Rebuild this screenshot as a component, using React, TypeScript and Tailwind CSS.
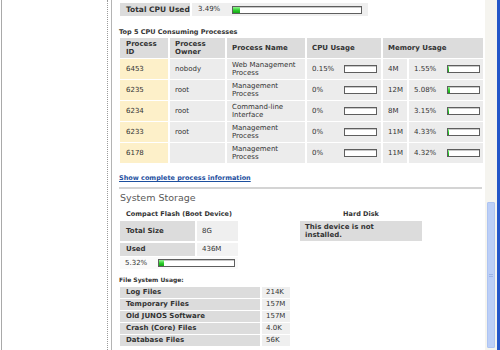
import React from 'react';

const PROCESSES = [
  { pid: '6453', owner: 'nobody', name: ['Web Management', 'Process'], cpu: '0.15%', cpuFill: 0, mem: '4M', memPct: '1.55%', memFill: 1 },
  { pid: '6235', owner: 'root', name: ['Management', 'Process'], cpu: '0%', cpuFill: 0, mem: '12M', memPct: '5.08%', memFill: 2 },
  { pid: '6234', owner: 'root', name: ['Command-line', 'Interface'], cpu: '0%', cpuFill: 0, mem: '8M', memPct: '3.15%', memFill: 1 },
  { pid: '6233', owner: 'root', name: ['Management', 'Process'], cpu: '0%', cpuFill: 0, mem: '11M', memPct: '4.33%', memFill: 1 },
  { pid: '6178', owner: '', name: ['Management', 'Process'], cpu: '0%', cpuFill: 0, mem: '11M', memPct: '4.32%', memFill: 1 },
];

const FILE_SYSTEMS = [
  { label: 'Log Files', size: '214K' },
  { label: 'Temporary Files', size: '157M' },
  { label: 'Old JUNOS Software', size: '157M' },
  { label: 'Crash (Core) Files', size: '4.0K' },
  { label: 'Database Files', size: '56K' },
];

const Bar: React.FC<{ fill: number; className: string }> = ({ fill, className }) => (
  <div className={`h-[8px] border border-[#5e5e5e] bg-white shadow-[inset_0_1px_0_#c8c8c8] flex ${className}`}>
    {fill > 0 && <div className="h-full bg-gradient-to-b from-[#8ef58e] via-[#2ed12e] to-[#16a616]" style={{ width: `${fill}px` }} />}
  </div>
);

const App: React.FC = () => {
  return (
    <div className="w-[500px] h-[350px] overflow-hidden flex bg-white text-[#333] font-['DejaVu_Sans',Verdana,sans-serif]">
      {/* left nav pane */}
      <div className="w-px ml-px bg-[#a9a9a9]" />
      <div className="w-[106px] border-r border-dotted border-[#9a9a9a]" />
      <div className="w-[3px]" />

      {/* main content */}
      <div className="w-[374px] border-l border-[#b4b4b4] pl-[6px] pt-[3px]">
        <div className="flex gap-[2px] ml-[2px] h-[13px]">
          <div className="w-[70px] bg-[#dcdcdc] flex items-center pl-[6px] text-[7.5px] font-bold">Total CPU Used</div>
          <div className="w-[176px] bg-[#efefef] flex items-center pl-[6px] text-[7px]">
            <span className="w-[34px]">3.49%</span>
            <Bar fill={7} className="w-[130px]" />
          </div>
        </div>

        <div className="mt-[12px] ml-[1px] text-[6.5px] font-bold leading-[8px]">Top 5 CPU Consuming Processes</div>

        <table className="mt-[1px] border-separate border-spacing-x-[2px] border-spacing-y-px text-[7px] leading-[8.5px]">
          <thead>
            <tr className="h-[20px] text-left font-bold">
              <th className="w-[48px] bg-[#dcdcdc] pl-[6px] align-middle">Process<br />ID</th>
              <th className="w-[55px] bg-[#dcdcdc] pl-[5px] align-middle">Process<br />Owner</th>
              <th className="w-[78px] bg-[#dcdcdc] pl-[5px] align-middle">Process Name</th>
              <th className="w-[74px] bg-[#dcdcdc] pl-[5px] align-middle">CPU Usage</th>
              <th colSpan={2} className="bg-[#dcdcdc] pl-[5px] align-middle">Memory Usage</th>
            </tr>
          </thead>
          <tbody>
            {PROCESSES.map((p) => (
              <tr key={p.pid} className="h-[20px]">
                <td className="bg-[#fdf0c9] pl-[6px]">{p.pid}</td>
                <td className="bg-[#ececec] pl-[5px]">{p.owner}</td>
                <td className="bg-[#ececec] pl-[5px]">{p.name[0]}<br />{p.name[1]}</td>
                <td className="bg-[#ececec] pl-[5px]">
                  <div className="flex items-center">
                    <span className="w-[32px]">{p.cpu}</span>
                    <Bar fill={p.cpuFill} className="w-[33px]" />
                  </div>
                </td>
                <td className="w-[24px] bg-[#ececec] pl-[5px]">{p.mem}</td>
                <td className="w-[74px] bg-[#ececec] pl-[5px]">
                  <div className="flex items-center">
                    <span className="w-[33px]">{p.memPct}</span>
                    <Bar fill={p.memFill} className="w-[33px]" />
                  </div>
                </td>
              </tr>
            ))}
          </tbody>
        </table>

        <a href="#" className="block mt-[10px] ml-[1px] text-[6.5px] font-bold leading-[8px] text-[#1d4f9e] underline">Show complete process information</a>

        <div className="mt-[5px] ml-[1px] w-[363px] h-[2px] bg-[#d4d4d4]" />

        <div className="mt-[3px] ml-[2px] text-[9.5px] leading-[12px] text-[#5a5a5a]">System Storage</div>

        <div className="flex mt-[6px] ml-[2px]">
          <div className="w-[180px]">
            <div className="w-[118px] text-center text-[6.5px] font-bold leading-[8px]">Compact Flash (Boot Device)</div>
            <div className="flex gap-[2px] mt-[3px] h-[20px] text-[7px]">
              <div className="w-[75px] bg-[#dcdcdc] flex items-center pl-[6px] font-bold">Total Size</div>
              <div className="w-[41px] bg-[#efefef] flex items-center pl-[5px]">8G</div>
            </div>
            <div className="flex gap-[2px] mt-[2px] h-[13px] text-[7px]">
              <div className="w-[75px] bg-[#dcdcdc] flex items-center pl-[6px] font-bold">Used</div>
              <div className="w-[41px] bg-[#f3f3f3] flex items-center pl-[5px]">436M</div>
            </div>
            <div className="flex items-center h-[12px] mt-px bg-[#fafafa] w-[118px] text-[7px]">
              <span className="w-[38px] pl-[5px]">5.32%</span>
              <Bar fill={5} className="w-[77px]" />
            </div>
          </div>
          <div className="w-[122px]">
            <div className="text-center text-[6.5px] font-bold leading-[8px]">Hard Disk</div>
            <div className="mt-[3px] h-[20px] bg-[#dcdcdc] pl-[5px] pt-[2px] text-[7px] font-bold leading-[8px]">
              This device is not<br />installed.
            </div>
          </div>
        </div>

        <div className="mt-[7px] ml-[1px] text-[6px] font-bold leading-[8px]">File System Usage:</div>
        <div className="mt-[3px] ml-[2px] flex flex-col gap-px text-[7px]">
          {FILE_SYSTEMS.map((f) => (
            <div key={f.label} className="flex gap-[2px] h-[11px]">
              <div className="w-[140px] bg-[#dcdcdc] flex items-center pl-[6px] font-bold">{f.label}</div>
              <div className="w-[28px] bg-[#efefef] flex items-center pl-[4px]">{f.size}</div>
            </div>
          ))}
        </div>
      </div>

      {/* scrollbar */}
      <div className="w-[12px] bg-[#f5f4ef] flex flex-col pt-[202px] pb-[2px] px-[2px]">
        <div className="flex-1 bg-[#bccff7] border border-[#aec4f2] rounded-[1px] flex items-center justify-center">
          <div className="w-[4px] h-[3px] border-y border-[#9db4e6]" />
        </div>
      </div>
      <div className="w-[3px] bg-[#2456c8]" />
    </div>
  );
};

export default App;
